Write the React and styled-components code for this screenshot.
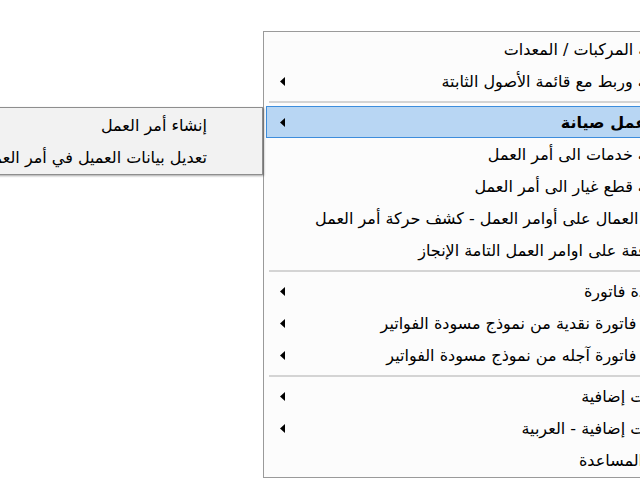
import React from "react";
import styled, { createGlobalStyle } from "styled-components";

const GlobalStyle = createGlobalStyle`
  html, body {
    margin: 0;
    padding: 0;
    width: 640px;
    height: 480px;
    overflow: hidden;
    background: #ffffff;
  }
  body {
    font-family: "DejaVu Sans", "Noto Sans", sans-serif;
  }
`;

const mainItems = [
  { label: "بطاقة المركبات / المعدات" },
  { label: "إضافة وربط مع قائمة الأصول الثابتة", sub: true },
  { sep: true },
  { label: "أمر عمل صيانة", sub: true, active: true },
  { label: "إضافة خدمات الى أمر العمل" },
  { label: "إضافة قطع غيار الى أمر العمل" },
  { label: "توزيع العمال على أوامر العمل - كشف حركة أمر العمل" },
  { label: "الموافقة على اوامر العمل التامة الإنجاز" },
  { sep: true },
  { label: "مسودة فاتورة", sub: true },
  { label: "إنشاء فاتورة نقدية من نموذج مسودة الفواتير", sub: true },
  { label: "إنشاء فاتورة آجله من نموذج مسودة الفواتير", sub: true },
  { sep: true },
  { label: "خدمات إضافية", sub: true },
  { label: "خدمات إضافية - العربية", sub: true },
  { label: "دليل المساعدة" },
];

const subItems = ["إنشاء أمر العمل", "تعديل بيانات العميل في أمر العمل"];

const Arrow = () => (
  <svg width="5" height="9" viewBox="0 0 5 9">
    <polygon points="5,0 5,9 0,4.5" fill="#000" />
  </svg>
);

export default function App() {
  return (
    <>
      <GlobalStyle />
      <Menu>
        {mainItems.map((it, i) =>
          it.sep ? (
            <Separator key={i} />
          ) : (
            <Item key={i} $active={it.active}>
              <Label $bold={it.active}>{it.label}</Label>
              <ArrowBox>{it.sub && <Arrow />}</ArrowBox>
            </Item>
          )
        )}
      </Menu>
      <SubMenu>
        {subItems.map((s, i) => (
          <SubItem key={i}>{s}</SubItem>
        ))}
      </SubMenu>
    </>
  );
}

const Menu = styled.div`
  position: absolute;
  left: 263px;
  top: 31px;
  width: 468px;
  direction: rtl;
  background: #fcfcfc;
  border: 1px solid #9a9a9a;
  border-right: none;
  padding: 1px 0 1px 2px;
  box-sizing: border-box;
`;

const Item = styled.div`
  display: flex;
  align-items: center;
  justify-content: space-between;
  height: 32px;
  box-sizing: border-box;
  padding: 0 53px 0 13px;
  font-size: 16px;
  color: #000;
  background: ${(p) => (p.$active ? "#b8d6f3" : "transparent")};
  border: 1px solid ${(p) => (p.$active ? "#3d8ddc" : "transparent")};
`;

const Label = styled.span`
  white-space: nowrap;
  font-weight: ${(p) => (p.$bold ? "bold" : "normal")};
`;

const ArrowBox = styled.span`
  display: flex;
  width: 5px;
  height: 9px;
`;

const Separator = styled.div`
  height: 9px;
  display: flex;
  align-items: center;
  padding-left: 3px;
  &::after {
    content: "";
    flex: 1;
    height: 2px;
    background: #d4d4d4;
  }
`;

const SubMenu = styled.div`
  position: absolute;
  left: -40px;
  top: 107px;
  width: 303px;
  direction: rtl;
  background: #f2f2f2;
  border: 1px solid #8e8e8e;
  padding: 1px 0;
  box-sizing: border-box;
  box-shadow: 1px 1px 2px rgba(0, 0, 0, 0.35);
`;

const SubItem = styled.div`
  height: 32px;
  display: flex;
  align-items: center;
  padding-right: 55px;
  font-size: 16px;
  color: #000;
  white-space: nowrap;
`;
